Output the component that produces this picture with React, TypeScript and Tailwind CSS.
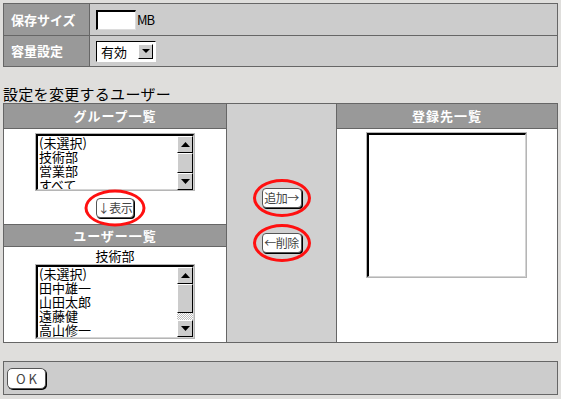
import React from "react";

const font = { fontFamily: '"Noto Sans CJK JP", "Liberation Sans", sans-serif' };

function Arrow({ up }: { up?: boolean }) {
  return (
    <div className="flex-none h-[17px] bg-[#cccccc] border-t border-l border-t-white border-l-white border-b border-r border-b-black border-r-black flex items-center justify-center">
      <svg width="9" height="5" viewBox="0 0 9 5">
        {up ? <polygon points="4.5,0 9,5 0,5" fill="#000" /> : <polygon points="0,0 9,0 4.5,5" fill="#000" />}
      </svg>
    </div>
  );
}

function ScrollBar({ thumb }: { thumb: number }) {
  return (
    <div className="w-[16px] flex-none flex flex-col">
      <Arrow up />
      <div className="flex-none bg-[#cccccc] border-t border-l border-t-white border-l-white border-b border-r border-b-black border-r-black" style={{ height: thumb }} />
      <div className="flex-1 bg-[repeating-conic-gradient(#bdbdbd_0_25%,#ffffff_0_50%)] bg-[length:2px_2px]" />
      <Arrow />
    </div>
  );
}

function ListBox({ items, h, thumb }: { items: string[]; h: number; thumb: number }) {
  return (
    <div className="w-[160px] border border-[#b5b5b5] bg-white" style={{ height: h }}>
      <div className="h-full border-t-2 border-l-2 border-black border-r border-b border-r-[#d4d4d4] border-b-[#d4d4d4] flex">
        <div className="flex-1 pl-[1px] text-[13px] text-black overflow-hidden">
          {items.map((t) => (
            <div key={t} className="h-[14px] leading-[14px] whitespace-nowrap">{t}</div>
          ))}
        </div>
        <ScrollBar thumb={thumb} />
      </div>
    </div>
  );
}

function Btn({ children, w }: { children: React.ReactNode; w: number }) {
  return (
    <div
      className="h-[20px] bg-white rounded-[4px] border border-[#555] shadow-[1px_1px_0_#000] flex items-center justify-center text-[12px] text-[#444] leading-none whitespace-nowrap tracking-[-0.5px]"
      style={{ width: w }}
    >
      {children}
    </div>
  );
}

function Ellipse({ w, h }: { w: number; h: number }) {
  return (
    <div
      className="absolute left-1/2 top-1/2 -translate-x-1/2 -translate-y-1/2 rounded-[50%] border-[3px] border-[#ff1010] pointer-events-none"
      style={{ width: w, height: h }}
    />
  );
}

export default function App() {
  return (
    <div className="w-[561px] h-[399px] bg-[#dfdedc] pt-[3px] px-[3px] text-black" style={font}>
      {/* top settings table */}
      <div className="w-[555px] border border-[#666] grid grid-cols-[86px_1fr]">
        <div className="h-[32px] bg-[#999999] border-r border-b border-[#666] flex items-center pl-[7px] text-white font-bold text-[13px]">
          保存サイズ
        </div>
        <div className="h-[32px] bg-[#cccccc] border-b border-[#666] flex items-center pl-[6px]">
          <div className="w-[40px] h-[20px] bg-white border-t-2 border-l-2 border-black border-r border-b border-r-[#dcdcdc] border-b-[#dcdcdc]" />
          <span className="text-[13px] tracking-[-1px] ml-[1px]">MB</span>
        </div>
        <div className="h-[30px] bg-[#999999] border-r border-[#666] flex items-center pl-[7px] text-white font-bold text-[13px]">
          容量設定
        </div>
        <div className="h-[30px] bg-[#cccccc] flex items-center pl-[6px]">
          <div className="w-[60px] h-[21px] bg-white border border-t-black border-l-black border-r-white border-b-white flex items-center">
            <span className="flex-1 text-[13px] pl-[4px] leading-none">有効</span>
            <div className="w-[15px] h-[15px] mr-[2px] bg-[#cccccc] border border-t-white border-l-white border-r-black border-b-black flex items-center justify-center">
              <svg width="8" height="4" viewBox="0 0 8 4">
                <polygon points="0,0 8,0 4,4" fill="#000" />
              </svg>
            </div>
          </div>
        </div>
      </div>

      <div className="mt-[17px] h-[19px] text-[15px] leading-[19px] tracking-[0.3px]">設定を変更するユーザー</div>

      {/* main table */}
      <div className="w-[555px] h-[240px] border border-[#666] flex">
        {/* left column */}
        <div className="w-[223px] flex flex-col border-r border-[#666] bg-white">
          <div className="h-[25px] bg-[#999999] border-b border-[#666] flex items-center justify-center text-white font-bold text-[13px] tracking-[1px]">
            グループ一覧
          </div>
          <div className="h-[95px] flex flex-col items-center pt-[4px]">
            <ListBox items={["(未選択)", "技術部", "営業部", "すべて"]} h={58} thumb={20} />
            <div className="relative mt-[7px]">
              <Btn w={38}>↓表示</Btn>
              <Ellipse w={61} h={37} />
            </div>
          </div>
          <div className="h-[23px] bg-[#999999] border-t border-b border-[#666] flex items-center justify-center text-white font-bold text-[13px] tracking-[1px]">
            ユーザー一覧
          </div>
          <div className="flex-1 flex flex-col items-center">
            <div className="h-[17px] text-[13px] leading-[17px]">技術部</div>
            <ListBox items={["(未選択)", "田中雄一", "山田太郎", "遠藤健", "高山修一"]} h={75} thumb={29} />
          </div>
        </div>
        {/* middle column */}
        <div className="w-[110px] bg-[#d0d0d0] border-r border-[#666] flex flex-col items-center pt-[84px]">
          <div className="relative">
            <Btn w={40}>追加→</Btn>
            <Ellipse w={58} h={38} />
          </div>
          <div className="relative mt-[25px]">
            <Btn w={40}>←削除</Btn>
            <Ellipse w={58} h={38} />
          </div>
        </div>
        {/* right column */}
        <div className="flex-1 bg-white flex flex-col">
          <div className="h-[25px] bg-[#999999] border-b border-[#666] flex items-center justify-center text-white font-bold text-[13px] tracking-[1px]">
            登録先一覧
          </div>
          <div className="flex justify-center pt-[3px] pr-[1px]">
            <div className="w-[161px] h-[146px] border border-[#b5b5b5]">
              <div className="h-full border-t-2 border-l-2 border-black border-r border-b border-r-[#d4d4d4] border-b-[#d4d4d4] bg-white" />
            </div>
          </div>
        </div>
      </div>

      {/* bottom bar */}
      <div className="mt-[18px] w-[555px] h-[34px] bg-[#cccccc] border border-[#666] flex items-center pl-[3px]">
        <div className="w-[39px] h-[21px] bg-white rounded-[5px] border border-[#555] shadow-[1px_1px_0_#000] flex items-center justify-center text-[13px] text-[#444] tracking-[3px] pl-[3px] leading-none">
          OK
        </div>
      </div>
    </div>
  );
}
